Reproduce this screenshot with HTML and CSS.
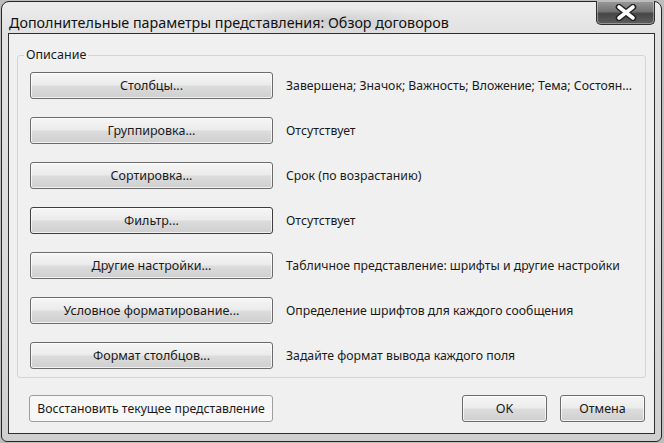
FILE: index.html
```html
<!DOCTYPE html>
<html lang="ru">
<head>
  <meta charset="UTF-8" />
  <meta name="viewport" content="width=device-width, initial-scale=1.0" />
  <title>Дополнительные параметры представления</title>
  <link rel="stylesheet" href="styles.css">
</head>

<body>
  <div class="window">
    <div class="titlebar">
      <span class="title">Дополнительные параметры представления: Обзор договоров</span>
      <button class="close" type="button" aria-label="Закрыть">
        <svg width="24" height="17" viewBox="0 0 24 17">
          <path d="M5 3 L19 14 M19 3 L5 14" stroke="#222" stroke-width="6.5" stroke-linecap="round" />
          <path d="M5 3 L19 14 M19 3 L5 14" stroke="#fff" stroke-width="3.6" stroke-linecap="round" />
        </svg>
      </button>
    </div>

    <div class="client">
      <fieldset class="group">
        <legend>Описание</legend>
        <div class="row">
          <button class="btn wide" type="button">Столбцы...</button>
          <span class="desc">Завершена; Значок; Важность; Вложение; Тема; Состоян...</span>
        </div>
        <div class="row">
          <button class="btn wide" type="button">Группировка...</button>
          <span class="desc">Отсутствует</span>
        </div>
        <div class="row">
          <button class="btn wide" type="button">Сортировка...</button>
          <span class="desc">Срок (по возрастанию)</span>
        </div>
        <div class="row">
          <button class="btn wide focused" type="button">Фильтр...</button>
          <span class="desc">Отсутствует</span>
        </div>
        <div class="row">
          <button class="btn wide" type="button">Другие настройки...</button>
          <span class="desc">Табличное представление: шрифты и другие настройки</span>
        </div>
        <div class="row">
          <button class="btn wide" type="button">Условное форматирование...</button>
          <span class="desc">Определение шрифтов для каждого сообщения</span>
        </div>
        <div class="row">
          <button class="btn wide" type="button">Формат столбцов...</button>
          <span class="desc">Задайте формат вывода каждого поля</span>
        </div>
      </fieldset>

      <div class="footer">
        <button class="btn reset" type="button">Восстановить текущее представление</button>
        <div class="spacer"></div>
        <button class="btn small" type="button">OK</button>
        <button class="btn small" type="button">Отмена</button>
      </div>
    </div>
  </div>
</body>
</html>
```

FILE: styles.css
```css
html, body {
  margin: 0;
  height: 100%;
  background: #bdbdbd;
}

body {
  font-family: 'Noto Sans', 'Open Sans', sans-serif;
  color: #1a1a1a;
  padding: 1px;
  box-sizing: border-box;
}

.window {
  width: 661px;
  height: 441px;
  box-sizing: border-box;
  border: 1px solid #262626;
  border-radius: 8px 8px 6px 6px;
  padding: 0 6px 7px 6px;
  display: flex;
  flex-direction: column;
  background:
    radial-gradient(ellipse 120px 14px at 330px 20px, rgba(160, 160, 160, 0.35), transparent),
    linear-gradient(to bottom, #ececec 0, #e2e2e2 30px, #dadada 60%, #cfcfcf 100%);
}

.titlebar {
  height: 31px;
  display: flex;
  align-items: flex-start;
  justify-content: space-between;
}

.title {
  font-size: 14.3px;
  margin: 11px 0 0 1px;
  color: #111;
  white-space: nowrap;
}

.close {
  width: 59px;
  height: 24px;
  margin: -1px 0 0 0;
  padding: 0;
  border: 1px solid #2e2e2e;
  border-top: none;
  border-radius: 0 0 5px 5px;
  background: linear-gradient(to bottom, #9a9a9a 0, #747474 45%, #464646 55%, #5e5e5e 100%);
  display: flex;
  align-items: center;
  justify-content: center;
  box-shadow: inset 0 0 0 1px rgba(255, 255, 255, 0.35);
}

.client {
  flex: 1;
  background: #f0f0f0;
  border: 1px solid #2e2e2e;
  padding: 13px 8px 10px 8px;
  display: flex;
  flex-direction: column;
}

.group {
  margin: 0;
  border: 1px solid #d4d4d4;
  border-radius: 3px;
  padding: 9px 12px 8px 12px;
  display: flex;
  flex-direction: column;
  gap: 18px;
}

.group legend {
  font-size: 12.5px;
  padding: 0 2px;
  margin-left: -6px;
  line-height: 16px;
}

.row {
  display: flex;
  align-items: center;
  gap: 13px;
}

.desc {
  font-size: 12.25px;
  white-space: nowrap;
}

.btn {
  font-family: inherit;
  font-size: 12.5px;
  color: #1a1a1a;
  height: 27px;
  padding: 0;
  border: 1px solid #6b6b6b;
  border-radius: 3px;
  background: linear-gradient(to bottom, #f6f6f6 0, #ebebeb 48%, #dcdcdc 52%, #cfcfcf 100%);
  box-shadow: inset 0 0 0 1px rgba(255, 255, 255, 0.7);
}

.btn.wide {
  width: 243px;
  flex: none;
}

.btn.focused {
  border-color: #3e3e3e;
}

.footer {
  margin-top: 17px;
  padding: 0 1px 0 12px;
  display: flex;
  gap: 13px;
}

.spacer {
  flex: 1;
}

.btn.reset {
  width: 244px;
  font-size: 12.25px;
  background: #f7f7f7;
  border-color: #9e9e9e;
  box-shadow: none;
}

.btn.small {
  width: 85px;
}
```
